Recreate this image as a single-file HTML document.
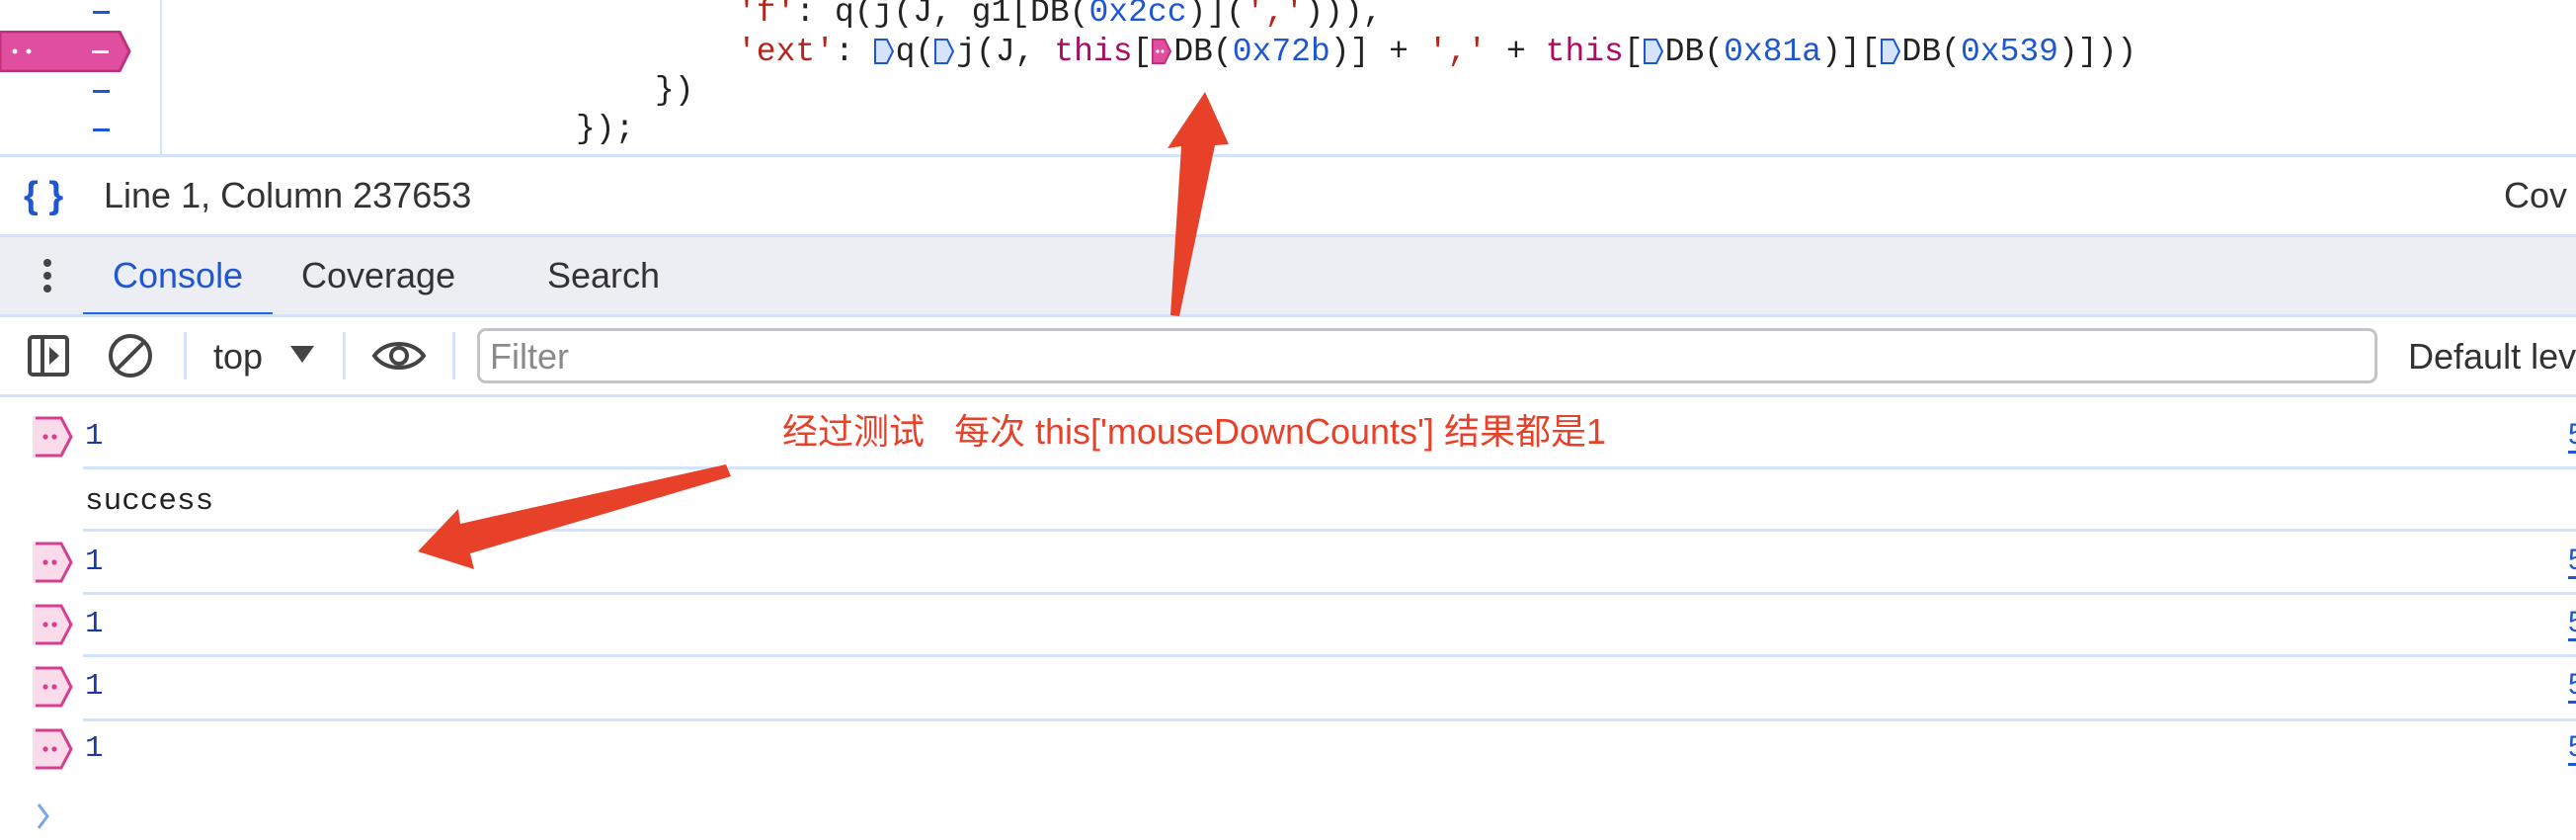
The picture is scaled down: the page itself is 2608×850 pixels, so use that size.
<!DOCTYPE html>
<html><head><meta charset="utf-8"><style>
*{margin:0;padding:0;box-sizing:border-box}
body{width:2608px;height:850px;overflow:hidden;background:#fff;position:relative;font-family:"Liberation Sans",sans-serif}
.a{position:absolute;white-space:nowrap}
.mono{font-family:"Liberation Mono","DejaVu Sans Mono",monospace;font-size:33px;white-space:pre;color:#222;line-height:40px}
.s{color:#b3261e}.n{color:#1f57d1}.k{color:#aa0d62}
.ic{display:inline-block;width:20px;height:26px;vertical-align:-4px;margin-right:2px}
.sep{position:absolute;left:0;width:2608px;height:3px;background:#d3e3fd}
.rsep{position:absolute;left:84px;width:2524px;height:3px;background:#d3e3fd}
.dash{position:absolute;left:94px;width:17px;height:3px;background:#1f57d1}
.ui{font-size:36px;color:#333;line-height:40px}
.badge{position:absolute;left:33px;width:42px;height:42px}
.one{position:absolute;left:86px;font-family:"Liberation Mono",monospace;font-size:31px;color:#1a3aa6;line-height:40px}
.lnk{position:absolute;left:2600px;width:8px;height:36px;color:#1f57d1;font-size:30px;overflow:hidden;border-bottom:3px solid #1f57d1}
</style></head><body>
<div class="a" style="left:162px;top:0;width:2px;height:157px;background:#d3e3fd"></div>
<div class="dash" style="top:11px"></div>
<div class="dash" style="top:91px"></div>
<div class="dash" style="top:130px"></div>
<svg class="a" style="left:0;top:31px" width="134" height="42"><path d="M0 1H121L131 21L121 41H0Z" fill="#e04e9f" stroke="#c2307c" stroke-width="3"/><circle cx="15" cy="21" r="2.5" fill="#fff"/><circle cx="29" cy="21" r="2.5" fill="#fff"/><rect x="93" y="20" width="17" height="3" fill="#fff"/></svg>
<div class="a mono" style="left:746px;top:-7px"><span class="s">'f'</span>: q(j(J, g1[DB(<span class="n">0x2cc</span>)](<span class="s">','</span>))),</div>
<div class="a mono" style="left:746px;top:33px"><span class="s">'ext'</span>: <svg class="ic" viewBox="0 0 20 26"><path d="M1 1H13L19 13L13 25H1Z" fill="#d6e3fd" stroke="#1f57d1" stroke-width="2"/></svg>q(<svg class="ic" viewBox="0 0 20 26"><path d="M1 1H13L19 13L13 25H1Z" fill="#d6e3fd" stroke="#1f57d1" stroke-width="2"/></svg>j(J, <span class="k">this</span>[<svg class="ic" viewBox="0 0 20 26"><path d="M1 1H13L19 13L13 25H1Z" fill="#e04e9f" stroke="#c2307c" stroke-width="2"/><circle cx="6" cy="13" r="1.6" fill="#fff"/><circle cx="11" cy="13" r="1.6" fill="#fff"/></svg>DB(<span class="n">0x72b</span>)] + <span class="s">','</span> + <span class="k">this</span>[<svg class="ic" viewBox="0 0 20 26"><path d="M1 1H13L19 13L13 25H1Z" fill="#d6e3fd" stroke="#1f57d1" stroke-width="2"/></svg>DB(<span class="n">0x81a</span>)][<svg class="ic" viewBox="0 0 20 26"><path d="M1 1H13L19 13L13 25H1Z" fill="#d6e3fd" stroke="#1f57d1" stroke-width="2"/></svg>DB(<span class="n">0x539</span>)]))</div>
<div class="a mono" style="left:663px;top:72px">})</div>
<div class="a mono" style="left:583px;top:111px">});</div>
<div class="sep" style="top:156px"></div>
<div class="a" style="left:24px;top:176px;font-size:38px;color:#1f57d1;font-weight:bold;line-height:44px">{ }</div>
<div class="a ui" style="left:105px;top:178px">Line 1, Column 237653</div>
<div class="a ui" style="left:2535px;top:178px">Cov</div>
<div class="sep" style="top:237px"></div>
<div class="a" style="left:0;top:240px;width:2608px;height:78px;background:#eceef4"></div>
<svg class="a" style="left:42px;top:260px" width="12" height="40"><circle cx="6" cy="6" r="4" fill="#444"/><circle cx="6" cy="19" r="4" fill="#444"/><circle cx="6" cy="32" r="4" fill="#444"/></svg>
<div class="a ui" style="left:114px;top:259px;color:#1f57d1">Console</div>
<div class="a ui" style="left:305px;top:259px">Coverage</div>
<div class="a ui" style="left:554px;top:259px">Search</div>
<div class="a" style="left:84px;top:316px;width:192px;height:4px;background:#1f66e8"></div>
<div class="sep" style="top:318px"></div>
<svg class="a" style="left:27px;top:338px" width="44" height="44"><rect x="3" y="3" width="38" height="38" rx="3" fill="none" stroke="#444" stroke-width="4"/><line x1="16" y1="3" x2="16" y2="41" stroke="#444" stroke-width="4"/><path d="M23 13L33 22L23 31Z" fill="#444"/></svg>
<svg class="a" style="left:108px;top:336px" width="48" height="48"><circle cx="24" cy="24" r="20" fill="none" stroke="#444" stroke-width="4"/><line x1="10" y1="38" x2="38" y2="10" stroke="#444" stroke-width="4"/></svg>
<div class="a" style="left:186px;top:336px;width:3px;height:48px;background:#d3e3fd"></div>
<div class="a ui" style="left:216px;top:341px">top</div>
<svg class="a" style="left:294px;top:350px" width="24" height="18"><path d="M0 0H24L12 17Z" fill="#444"/></svg>
<div class="a" style="left:347px;top:336px;width:3px;height:48px;background:#d3e3fd"></div>
<svg class="a" style="left:376px;top:340px" width="56" height="40"><path d="M3 20C14 4 42 4 53 20C42 36 14 36 3 20Z" fill="none" stroke="#444" stroke-width="4"/><circle cx="28" cy="20" r="8" fill="none" stroke="#444" stroke-width="4"/></svg>
<div class="a" style="left:458px;top:336px;width:3px;height:48px;background:#d3e3fd"></div>
<div class="a" style="left:483px;top:332px;width:1924px;height:56px;border:3px solid #c4c4c4;border-radius:9px"></div>
<div class="a ui" style="left:496px;top:341px;color:#8a8a8a">Filter</div>
<div class="a ui" style="left:2438px;top:341px">Default lev</div>
<div class="sep" style="top:399px"></div>
<svg width="0" height="0" style="position:absolute"><defs><g id="b"><path d="M1 2H29L39 21L29 40H1" fill="#f9dbea" stroke="#d63f8f" stroke-width="3"/><rect x="0" y="0" width="3" height="42" fill="#f9dbea"/><circle cx="13" cy="21" r="2.6" fill="#d63f8f"/><circle cx="22" cy="21" r="2.6" fill="#d63f8f"/></g></defs></svg>
<svg class="badge" style="top:421px"><use href="#b"/></svg><div class="one" style="top:422px">1</div><div class="lnk" style="top:423px">5</div>
<div class="rsep" style="top:472px"></div>
<div class="a mono" style="left:86px;top:488px;font-size:31px">success</div>
<div class="rsep" style="top:535px"></div>
<svg class="badge" style="top:548px"><use href="#b"/></svg><div class="one" style="top:549px">1</div><div class="lnk" style="top:550px">5</div>
<div class="rsep" style="top:599px"></div>
<svg class="badge" style="top:611px"><use href="#b"/></svg><div class="one" style="top:612px">1</div><div class="lnk" style="top:613px">5</div>
<div class="rsep" style="top:662px"></div>
<svg class="badge" style="top:674px"><use href="#b"/></svg><div class="one" style="top:675px">1</div><div class="lnk" style="top:676px">5</div>
<div class="rsep" style="top:727px"></div>
<svg class="badge" style="top:737px"><use href="#b"/></svg><div class="one" style="top:738px">1</div><div class="lnk" style="top:739px">5</div>
<svg class="a" style="left:36px;top:812px" width="16" height="28"><path d="M3 2L12 14L3 26" fill="none" stroke="#7ba3f0" stroke-width="3"/></svg>
<div class="a" style="left:792px;top:416px;font-size:36px;line-height:42px;color:#e8412a;white-space:pre;font-family:'Liberation Sans','Noto Sans CJK SC',sans-serif">经过测试   每次 this['mouseDownCounts'] 结果都是1</div>
<svg class="a" style="left:0;top:0" width="2608" height="850">
<path d="M1185 319L1196 148L1182 150L1220 93L1244 146L1230 147L1194 320Z" fill="#e8412a"/>
<path d="M735 470L740 482L476 560L480 576L423 558L464 515L466 530Z" fill="#e8412a"/>
</svg>
</body></html>
